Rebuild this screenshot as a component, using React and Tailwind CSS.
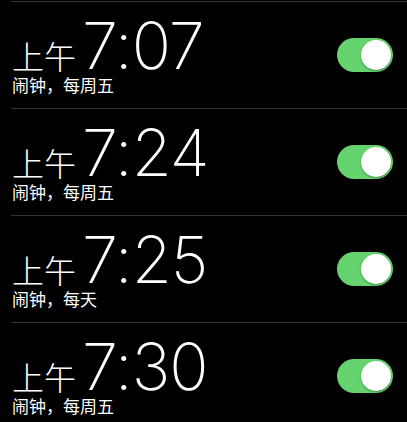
import React from 'react';

const alarms = [
  { time: '7:07', label: '闹钟，每周五' },
  { time: '7:24', label: '闹钟，每周五' },
  { time: '7:25', label: '闹钟，每天' },
  { time: '7:30', label: '闹钟，每周五' },
];

const Toggle = () => (
  <div className="w-[56px] h-[34px] rounded-full bg-[#65d36e] flex items-center justify-end p-[2px]">
    <div className="w-[30px] h-[30px] rounded-full bg-white shadow-[0_1px_2px_rgba(0,0,0,0.35)]" />
  </div>
);

const AlarmRow = ({ time, label }) => (
  <div className="ml-[11px] border-t border-[#333] h-[107px] flex items-start justify-between pr-[14px]">
    <div className="flex flex-col pt-[14px]">
      <div className="flex items-baseline h-[60px]">
        <span className="text-[32px] leading-[30px] font-light font-['Noto_Sans_CJK_SC',sans-serif] ml-px">
          上午
        </span>
        <span className="text-[65px] leading-[60px] font-extralight font-['Inter',sans-serif] ml-[6px] tracking-[-1px]">
          {time}
        </span>
      </div>
      <div className="text-[17px] leading-none font-['Noto_Sans_CJK_SC',sans-serif] ml-[1px]">
        {label}
      </div>
    </div>
    <div className="self-center">
      <Toggle />
    </div>
  </div>
);

export default function App() {
  return (
    <div className="w-[407px] h-[422px] bg-black text-white overflow-hidden pt-px">
      {alarms.map((a, i) => (
        <AlarmRow key={i} {...a} />
      ))}
    </div>
  );
}
